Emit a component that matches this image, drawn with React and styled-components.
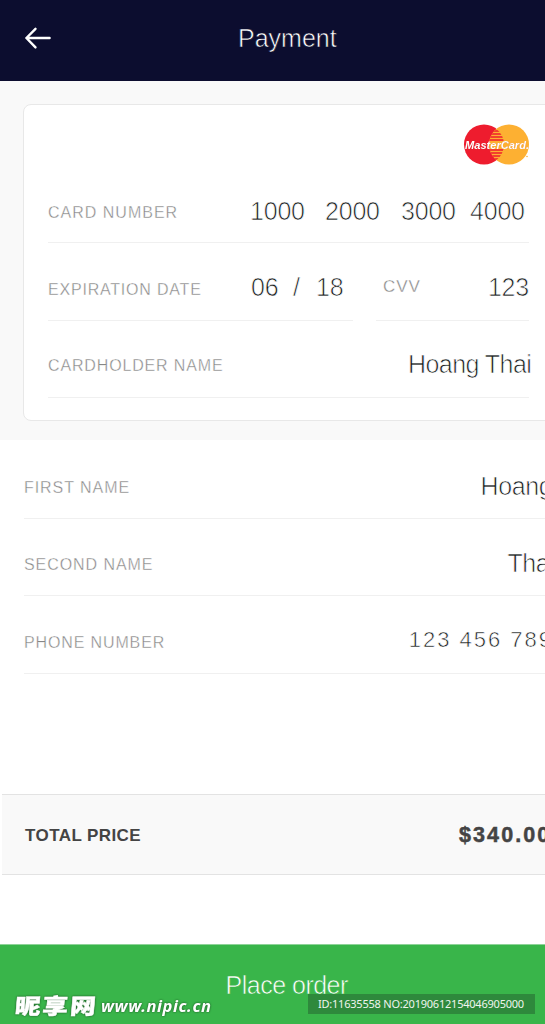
import React from "react";
import styled, { createGlobalStyle } from "styled-components";

const GlobalStyle = createGlobalStyle`
  * { box-sizing: border-box; }
  body {
    margin: 0;
    background: #fff;
    overflow: hidden;
    font-family: "Liberation Sans", Arial, Helvetica, sans-serif;
  }
`;

const Screen = styled.main`
  display: flex;
  flex-direction: column;
  width: 100%;
  height: 1024px;
  overflow: hidden;
  background: #fff;
`;

/* A stroke in the surface colour thins the regular cut down to a light one. */
const LightText = styled.span`
  flex: none;
  margin: 0;
  white-space: pre;
  font-weight: 400;
  font-size: ${(p) => p.$size || 25}px;
  line-height: 28px;
  letter-spacing: ${(p) => p.$tracking || 0}px;
  color: ${(p) => p.$color || "#1a1e1e"};
  -webkit-text-stroke: ${(p) => p.$thin || 0.7}px ${(p) => p.$surface || "#fff"};
`;

const Header = styled.header`
  display: grid;
  grid-template-columns: 238px 1fr;
  align-items: center;
  flex: none;
  height: 81px;
  padding-bottom: 5px;
  background: #0c0d2f;
`;

const BackButton = styled.button`
  display: flex;
  width: 28px;
  margin-left: 24px;
  padding: 0;
  border: 0;
  background: none;
`;

const CardSection = styled.section`
  flex: none;
  height: 359px;
  padding: 23px 0 0 23px;
  background: #f9f9f9;
`;

const CreditCard = styled.div`
  width: 560px;
  height: 317px;
  padding: 19px 0 0 24px;
  border: 1px solid #e8e8e8;
  border-radius: 8px;
  background: #fff;
`;

const Brand = styled.div`
  display: flex;
  width: 483px;
  height: 41px;
  justify-content: flex-end;

  svg { overflow: visible; }
`;

const BrandName = styled.text`
  fill: #fff;
  font: italic 700 11.5px "Liberation Sans", Arial, sans-serif;
  filter: drop-shadow(0.7px 0.7px 0 #b5322a88);
`;

const CardFields = styled.div`
  width: 481px;
`;

const Split = styled.div`
  display: grid;
  grid-template-columns: 305px 153px;
  column-gap: 23px;
`;

const Row = styled.div`
  display: flex;
  align-items: flex-end;
  height: ${(p) => p.$height || 77}px;
  border-bottom: 1px solid #f0f0f0;
`;

const Label = styled.span`
  flex: none;
  width: ${(p) => p.$width}px;
  margin-bottom: ${(p) => p.$lift || 21}px;
  padding-left: ${(p) => p.$inset || 0}px;
  white-space: nowrap;
  font-size: ${(p) => p.$size || 16}px;
  line-height: 18px;
  letter-spacing: ${(p) => p.$tracking || 1}px;
  color: #868686;
  -webkit-text-stroke: 0.35px #fff;
`;

const Value = styled(LightText)`
  margin-bottom: ${(p) => p.$lift || 17}px;
`;

const Group = styled.span`
  display: inline-block;
  width: ${(p) => p.$width}px;
`;

const Contact = styled.section`
  flex: none;
  width: 560px;
  height: 354px;
  padding: 2px 0 0 24px;
`;

const Total = styled.section`
  display: flex;
  align-items: center;
  flex: none;
  width: 560px;
  height: 81px;
  margin-left: 2px;
  padding: 2px 0 0 23px;
  border: solid #e3e3e3;
  border-width: 1px 0;
  background: #f9f9f9;
  color: #444;
  font-weight: 700;
`;

const TotalLabel = styled.span`
  width: 434px;
  font-size: 17px;
  letter-spacing: 0.42px;
`;

const TotalAmount = styled.span`
  font-size: 21.5px;
  letter-spacing: 2.1px;
  -webkit-text-stroke: 0.5px #444;
`;

const OrderButton = styled.button`
  position: relative;
  display: flex;
  align-items: flex-start;
  flex: none;
  height: 80px;
  margin-top: 69px;
  padding: 26px 0 0 225.5px;
  border: 0;
  border-top: 1px solid #8ed398;
  background: #39b54a;
  font-family: inherit;
  text-align: left;
`;

const SiteMark = styled.div`
  position: absolute;
  left: 15px;
  bottom: 5px;
  display: flex;
  align-items: center;
  height: 26px;
  color: #fff;
  filter: drop-shadow(0 0 1px rgba(0, 0, 0, 0.55));
`;

const SiteName = styled.span`
  width: 86px;
  font: 900 24px/26px "Noto Sans CJK SC", sans-serif;
  letter-spacing: 1.8px;
  white-space: nowrap;
  transform-origin: left center;
  transform: translateY(-1px) skewX(-5deg) scale(1.07, 0.9);
  -webkit-text-stroke: 0.5px #fff;
`;

const SiteUrl = styled.span`
  font: italic 700 16.5px/26px "Noto Sans", "Open Sans", sans-serif;
  letter-spacing: 0.6px;
`;

const IdTag = styled.div`
  position: absolute;
  left: 308px;
  bottom: 10px;
  width: 227px;
  height: 20px;
  padding-left: 10px;
  background: rgba(34, 84, 44, 0.45);
  color: #eef5ee;
  font: 11px/20px "Noto Sans", sans-serif;
  letter-spacing: -0.22px;
  white-space: nowrap;
`;

function BackArrow() {
  return (
    <svg width="28" height="24" viewBox="0 0 28 24" fill="none" stroke="#fff" strokeWidth="2.4" strokeLinecap="round" strokeLinejoin="round">
      <path d="M25.6 12H2.4M11.5 2.8L2.4 12l9.1 9.4" />
    </svg>
  );
}

function MasterCardLogo() {
  return (
    <svg width="68" height="41" viewBox="0 0 68 41">
      <defs>
        <clipPath id="overlap">
          <path d="M33.5 4.9a20 20 0 0 1 0 31.2a20 20 0 0 1 0-31.2z" />
        </clipPath>
      </defs>
      <circle cx="21" cy="20.5" r="20" fill="#ee1c2e" />
      <circle cx="46" cy="20.5" r="20" fill="#fdb032" />
      <g clipPath="url(#overlap)">
        <path d="M24 7h15M25 10h16M26 13h16M26 16h16M26 26h16M26 29h15M26 32h13M26 35h12" stroke="#ee1c2e" strokeWidth="1.7" />
      </g>
      <BrandName x="2" y="25.3" textLength="64" lengthAdjust="spacingAndGlyphs">MasterCard.</BrandName>
      <circle cx="64" cy="32.5" r="0.8" fill="#fdb032" />
    </svg>
  );
}

export default function App() {
  return (
    <Screen>
      <GlobalStyle />
      <Header>
        <BackButton aria-label="Back"><BackArrow /></BackButton>
        <LightText as="h1" $color="#fff" $thin={0.6} $surface="#0c0d2f">Payment</LightText>
      </Header>
      <CardSection>
        <CreditCard>
          <Brand><MasterCardLogo /></Brand>
          <CardFields>
            <Row $height={78}>
              <Label $width={202} $lift={20}>CARD NUMBER</Label>
              <Value $tracking={-0.2}>
                <Group $width={75}>1000</Group>
                <Group $width={76}>2000</Group>
                <Group $width={69}>3000</Group>
                <Group $width={56}>4000</Group>
              </Value>
            </Row>
            <Split>
              <Row $height={78}>
                <Label $width={203} $tracking={0.8}>EXPIRATION DATE</Label>
                <Value $lift={19} $tracking={-0.1}><Group $width={42}>06</Group><Group $width={23}>/</Group>18</Value>
              </Row>
              <Row $height={78}>
                <Label $width={112} $inset={7} $size={17} $lift={24}>CVV</Label>
                <Value $lift={19} $tracking={-0.3}>123</Value>
              </Row>
            </Split>
            <Row>
              <Label $width={360} $tracking={0.85} $lift={22}>CARDHOLDER NAME</Label>
              <Value $tracking={-0.55} $lift={19}>Hoang Thai</Value>
            </Row>
          </CardFields>
        </CreditCard>
      </CardSection>
      <Contact>
        <Row>
          <Label $width={456.5} $tracking={0.95}>FIRST NAME</Label>
          <Value $lift={18} $tracking={-0.4}>Hoang</Value>
        </Row>
        <Row>
          <Label $width={483.5} $tracking={0.93}>SECOND NAME</Label>
          <Value $lift={18} $tracking={-0.4}>Thai</Value>
        </Row>
        <Row $height={78}>
          <Label $width={384.7} $tracking={0.87}>PHONE NUMBER</Label>
          <Value $size={22} $thin={0.6} $tracking={2} $lift={19}>123 456 789</Value>
        </Row>
      </Contact>
      <Total>
        <TotalLabel>TOTAL PRICE</TotalLabel>
        <TotalAmount>$340.00</TotalAmount>
      </Total>
      <OrderButton>
        <LightText $color="#fff" $thin={0.6} $surface="#39b54a" $tracking={-0.5}>Place order</LightText>
        <SiteMark>
          <SiteName>昵享网</SiteName>
          <SiteUrl>www.nipic.cn</SiteUrl>
        </SiteMark>
        <IdTag>ID:11635558 NO:20190612154046905000</IdTag>
      </OrderButton>
    </Screen>
  );
}
